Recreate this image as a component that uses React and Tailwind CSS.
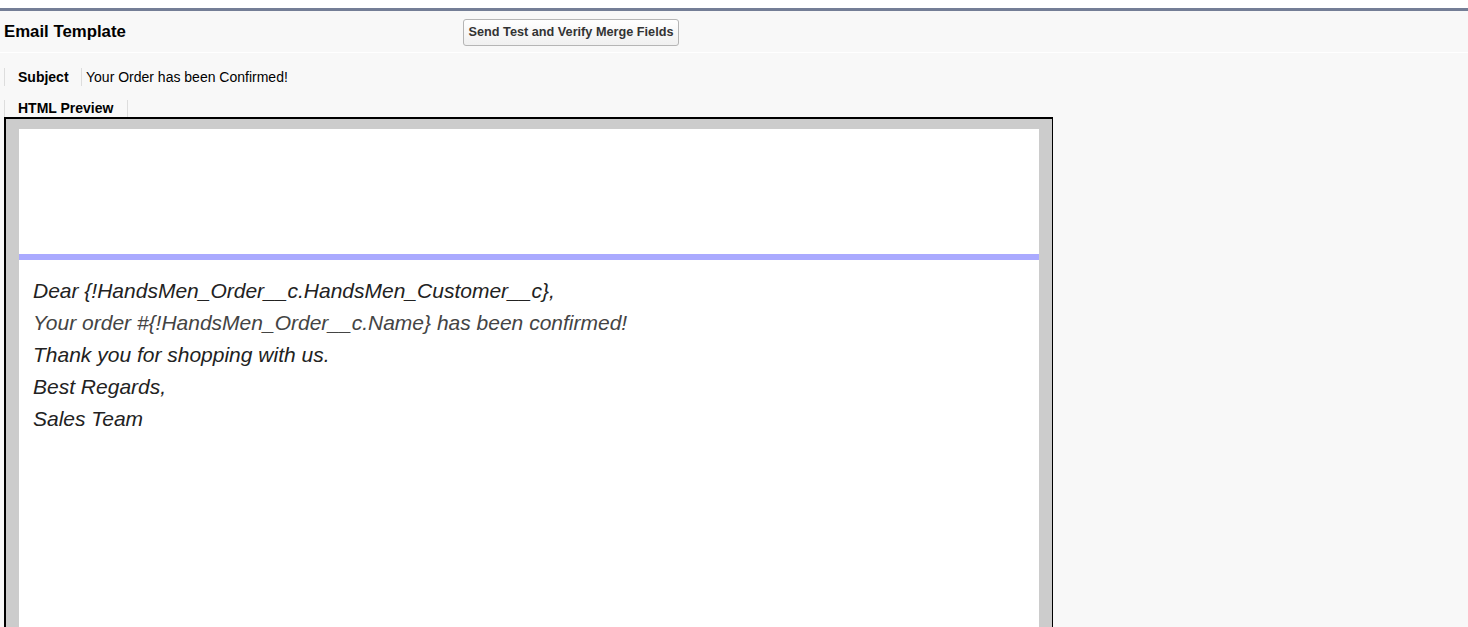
import React from 'react';

const lines = [
    { text: 'Dear {!HandsMen_Order__c.HandsMen_Customer__c},', color: 'text-[#222222]' },
    { text: 'Your order #{!HandsMen_Order__c.Name} has been confirmed!', color: 'text-[#444444]' },
    { text: 'Thank you for shopping with us.', color: 'text-[#222222]' },
    { text: 'Best Regards,', color: 'text-[#222222]' },
    { text: 'Sales Team', color: 'text-[#222222]' },
];

const FieldLabel = ({ label, width }) => (
    <div className={`flex items-center border-l border-[#dddddd] pl-[13px] h-full ${width}`}>
        <span className="text-[14px] font-bold text-black">{label}</span>
    </div>
);

export default function App() {
    return (
        <div className="min-h-screen bg-[#f8f8f8] font-['Liberation_Sans',Arial,sans-serif] overflow-hidden h-[627px]">
            <div className="h-[8px] bg-white" />
            <div className="h-[3px] bg-[#747e96]" />

            {/* header */}
            <div className="flex items-center h-[42px] border-b border-white pl-[4px]">
                <h1 className="text-[16.8px] font-bold text-black w-[459px]">Email Template</h1>
                <button className="mt-[2px] h-[27px] w-[216px] rounded-[3px] border border-[#b5b5b5] bg-gradient-to-b from-[#ffffff] to-[#f0f0f0] text-[12.7px] font-bold text-[#333333] leading-none">
                    Send Test and Verify Merge Fields
                </button>
            </div>

            {/* subject */}
            <div className="flex items-center h-[18px] mt-[15px] ml-[4px]">
                <FieldLabel label="Subject" width="w-[77px]" />
                <div className="flex items-center border-l border-[#dddddd] pl-[4px] h-full">
                    <span className="text-[14px] text-black">Your Order has been Confirmed!</span>
                </div>
            </div>

            {/* html preview */}
            <div className="flex items-center h-[17px] mt-[14px] ml-[4px]">
                <FieldLabel label="HTML Preview" width="w-[123px]" />
                <div className="border-l border-[#dddddd] h-full" />
            </div>

            <div className="ml-[4px] w-[1049px] border-t-2 border-l-2 border-r border-black bg-[#cccccc] pt-[10px] pl-[13px] pr-[13px]">
                <div className="bg-white h-[700px]">
                    <div className="h-[125px]" />
                    <div className="h-[6px] bg-[#aaaaff]" />
                    <div className="pl-[14px] pt-[15px]">
                        {lines.map((l, i) => (
                            <p key={i} className={`text-[21px] italic leading-[32px] ${l.color}`}>{l.text}</p>
                        ))}
                    </div>
                </div>
            </div>
        </div>
    );
}
